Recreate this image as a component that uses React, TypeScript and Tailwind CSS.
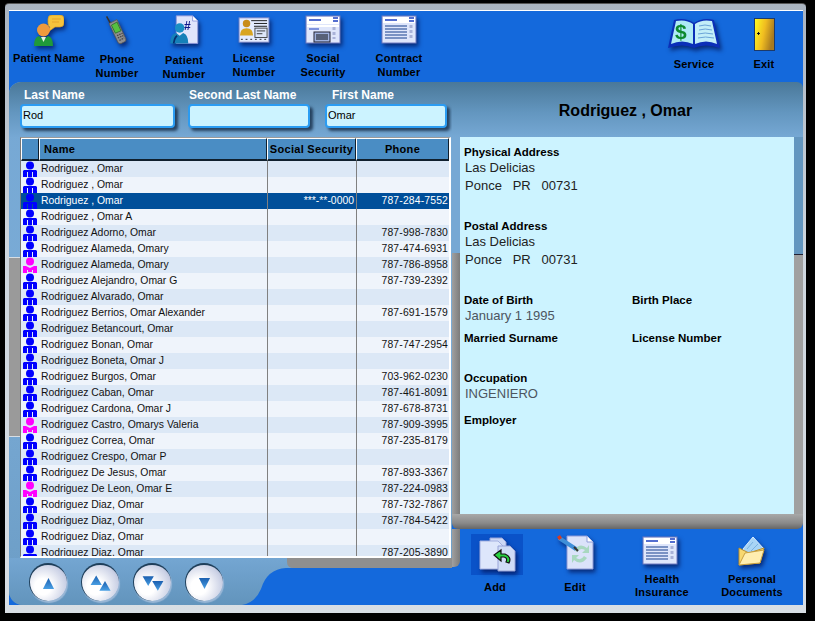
const FONT = "font-['Liberation_Sans',Arial,sans-serif]";

const patients: { name: string; ss?: string; phone?: string; female?: boolean }[] = [
  { name: "Rodriguez , Omar" },
  { name: "Rodriguez , Omar" },
  { name: "Rodriguez , Omar", ss: "***-**-0000", phone: "787-284-7552" },
  { name: "Rodriguez , Omar A" },
  { name: "Rodriguez Adorno, Omar", phone: "787-998-7830" },
  { name: "Rodriguez Alameda, Omary", phone: "787-474-6931" },
  { name: "Rodriguez Alameda, Omary", phone: "787-786-8958", female: true },
  { name: "Rodriguez Alejandro, Omar G", phone: "787-739-2392" },
  { name: "Rodriguez Alvarado, Omar" },
  { name: "Rodriguez Berrios, Omar Alexander", phone: "787-691-1579" },
  { name: "Rodriguez Betancourt, Omar" },
  { name: "Rodriguez Bonan, Omar", phone: "787-747-2954" },
  { name: "Rodriguez Boneta, Omar J" },
  { name: "Rodriguez Burgos, Omar", phone: "703-962-0230" },
  { name: "Rodriguez Caban, Omar", phone: "787-461-8091" },
  { name: "Rodriguez Cardona, Omar J", phone: "787-678-8731" },
  { name: "Rodriguez Castro, Omarys Valeria", phone: "787-909-3995", female: true },
  { name: "Rodriguez Correa, Omar", phone: "787-235-8179" },
  { name: "Rodriguez Crespo, Omar P" },
  { name: "Rodriguez De Jesus, Omar", phone: "787-893-3367" },
  { name: "Rodriguez De Leon, Omar E", phone: "787-224-0983", female: true },
  { name: "Rodriguez Diaz, Omar", phone: "787-732-7867" },
  { name: "Rodriguez Diaz, Omar", phone: "787-784-5422" },
  { name: "Rodriguez Diaz, Omar" },
  { name: "Rodriguez Diaz, Omar", phone: "787-205-3890" },
];

const SHADOW = "drop-shadow-[2px_3px_2px_rgba(0,10,70,0.65)]";
const TOP_GRADIENT = "bg-[linear-gradient(#4a7899,#6396bf_55%,#76a8d4)]";

function PatientNameIcon() {
  return (
    <svg width="30" height="31" viewBox="0 0 30 31" className={SHADOW}>
      <path d="M14 4 Q14 0 18 0 H26 Q30 0 30 4 V8 Q30 12 26 12 H21 L14 17 L16 12 Q14 11 14 8Z" fill="#f5c33c" stroke="#d09a2a" strokeWidth="0.7" />
      <path d="M18 4 H27 M18 7 H25" stroke="#e8a52a" strokeWidth="1.2" />
      <circle cx="9.5" cy="15" r="6.5" fill="#f09a3c" />
      <path d="M0 31 Q0 22 5 21 L9.5 25 L14 21 Q19 22 19 31Z" fill="#1f9a3a" />
      <path d="M7 22 L9.5 27 L12 22Z" fill="#e8f5e0" />
    </svg>
  );
}

function PhoneIcon() {
  return (
    <svg width="24" height="32" viewBox="0 0 30 36" className={SHADOW}>
      <path d="M2 1 L7 10" stroke="#333" strokeWidth="2" />
      <path d="M5 10 L15 5 L26 29 Q27 32 24 33 L20 35 Q17 36 16 33Z" fill="#8f8f8f" stroke="#555" />
      <path d="M8 12 L15 8 L20 19 L13 22Z" fill="#56c040" stroke="#2b6a2b" />
      <path d="M15 25 L22 22 M16 28 L23 25 M18 31 L24 28" stroke="#444" strokeWidth="1.5" strokeDasharray="2 1" />
    </svg>
  );
}

function PatientNumberIcon() {
  return (
    <svg width="30" height="31" viewBox="0 0 34 36" className={SHADOW}>
      <path d="M8 1 H27 L33 7 V33 H8Z" fill="#dfe4fb" stroke="#8a94d8" />
      <path d="M27 1 V7 H33" fill="#fff" stroke="#8a94d8" />
      <text x="17" y="17" fontSize="14" fontWeight="700" fill="#101a8a" fontFamily="Liberation Sans">#</text>
      <circle cx="12" cy="15" r="5.5" fill="#1a8fc4" />
      <path d="M1 33 Q1 22 8 21 L12 24 L16 21 Q22 23 22 33Z" fill="#1580b8" />
      <path d="M5 33 Q6 26 9 24" stroke="#062f70" strokeWidth="2" fill="none" />
    </svg>
  );
}

function LicenseIcon() {
  return (
    <svg width="34" height="28" viewBox="0 0 34 30" className={SHADOW}>
      <rect x="1" y="2" width="32" height="26" fill="#e4ecff" stroke="#7f8ac8" />
      <path d="M14 5 H31 M17 8 H31 M17 11 H31" stroke="#111" />
      <rect x="18" y="13" width="13" height="10" fill="#dde6f8" stroke="#444" />
      <path d="M20 16 H29 M20 19 H26" stroke="#333" />
      <circle cx="9" cy="8" r="4" fill="#c98d1a" />
      <path d="M2 21 Q2 13 9 13 Q16 13 16 21Z" fill="#d9a520" />
      <path d="M3 25 H31" stroke="#222" strokeDasharray="2 3" />
    </svg>
  );
}

function SocialIcon() {
  return (
    <svg width="36" height="30" viewBox="0 0 36 30" className={SHADOW}>
      <rect x="1" y="1" width="34" height="27" fill="#dfe6fb" stroke="#6f7ac0" />
      <rect x="2" y="2" width="32" height="7" fill="#fff" />
      <path d="M4 5 H16 M28 3 H33 M28 6 H33" stroke="#1c3fc0" strokeWidth="1.5" />
      <rect x="2" y="10" width="32" height="2" fill="#fff" />
      <path d="M4 14 H14" stroke="#1c3fc0" />
      <rect x="9" y="17" width="16" height="10" fill="#9fb1de" stroke="#223" />
      <path d="M11 20 H23 M11 22 H23 M11 24 H23" stroke="#111" />
      <path d="M29 12 V24" stroke="#aab2d8" strokeWidth="3" strokeDasharray="3 2" />
    </svg>
  );
}

function FormIcon() {
  return (
    <svg width="36" height="30" viewBox="0 0 36 30" className={SHADOW}>
      <rect x="1" y="1" width="34" height="27" fill="#dfe6fb" stroke="#6f7ac0" />
      <rect x="2" y="2" width="32" height="6" fill="#fff" />
      <path d="M4 5 H16 M28 3 H33 M28 6 H33" stroke="#1c3fc0" strokeWidth="1.5" />
      <path d="M4 11 H26 M4 14 H26 M4 17 H26 M4 20 H26 M4 23 H26" stroke="#7a92c4" strokeWidth="2" />
      <path d="M30 10 V24" stroke="#aab2d8" strokeWidth="3" strokeDasharray="3 2" />
    </svg>
  );
}

function ServiceIcon() {
  return (
    <svg width="54" height="34" viewBox="0 0 54 34" className={SHADOW}>
      <path d="M1 31 L7 3 Q18 0 27 6 Q36 0 47 3 L53 31 Q38 26 27 31 Q16 26 1 31Z" fill="#0b2fb8" />
      <path d="M4 27 L9 4 Q19 2 26 7 V27 Q15 22 4 27Z" fill="#aeeaf5" />
      <path d="M50 27 L45 4 Q35 2 28 7 V27 Q39 22 50 27Z" fill="#c2eef8" />
      <path d="M32 9 Q38 7 44 9 M32 13 Q38 11 45 13 M31 17 Q38 15 46 17 M31 21 Q38 19 47 21" stroke="#6aa4d8" fill="none" />
      <text x="8" y="22" fontSize="21" fontWeight="700" fill="#0c8a2e" fontFamily="Liberation Sans">$</text>
    </svg>
  );
}

function ExitIcon() {
  return (
    <svg width="21" height="33" viewBox="0 0 21 33">
      <defs>
        <linearGradient id="door" x1="0" x2="1" y1="0" y2="0.3">
          <stop offset="0" stopColor="#ffff20" />
          <stop offset="0.55" stopColor="#f0bc20" />
          <stop offset="1" stopColor="#a87a20" />
        </linearGradient>
      </defs>
      <rect x="0.5" y="0.5" width="20" height="32" fill="url(#door)" stroke="#1d3a6a" />
      <path d="M3 15.5 H6 M4.5 14 V17" stroke="#111" />
    </svg>
  );
}

function AddIcon() {
  return (
    <svg width="38" height="36" viewBox="0 0 38 36" className={SHADOW}>
      <path d="M12 1 H24 L28 5 V24 H12Z" fill="#cdd8f5" stroke="#98a4d8" />
      <path d="M2 4 H20 L25 9 V32 H2Z" fill="#dde6fb" stroke="#a4b0e0" />
      <path d="M20 9 H32 L37 14 V34 H20Z" fill="#d0dcf6" stroke="#98a4d8" />
      <path d="M31 26 Q34 20 27 17 H23 V13 L16 18 L23 24 V20 H26 Q30 21 28 25Z" fill="#28d040" stroke="#111" strokeWidth="1.2" />
    </svg>
  );
}

function EditIcon() {
  return (
    <svg width="38" height="36" viewBox="0 0 38 36" className={SHADOW}>
      <path d="M11 2 H31 L37 8 V35 H11Z" fill="#dbe3fa" stroke="#8f9bd8" />
      <path d="M31 2 V8 H37" fill="#fff" stroke="#8f9bd8" />
      <path d="M18 16 Q24 8 31 14 L33 11 V19 H26 L29 16 Q24 13 21 18Z" fill="#a8d8c0" />
      <path d="M31 24 Q25 32 18 26 L16 29 V21 H23 L20 24 Q25 27 28 22Z" fill="#a8d8c0" />
      <path d="M3 4 L20 15" stroke="#3f8fd8" strokeWidth="4" />
      <path d="M1 3 L4 1 L6 4 L3 6Z" fill="#d83a20" />
      <path d="M18 13 L22 17" stroke="#333" strokeWidth="2" />
    </svg>
  );
}

function DocumentsIcon() {
  return (
    <svg width="28" height="30" viewBox="0 0 28 30" className={SHADOW}>
      <path d="M5 13 L15 1 L26 13 L15 24Z" fill="#a8d4f5" stroke="#d8ecff" />
      <path d="M9 13 L15 6 M13 15 L20 8" stroke="#7ab0e0" />
      <path d="M1 12 L11 17 L26 12 L22 27 L1 29Z" fill="#f8d870" stroke="#b89030" />
      <path d="M1 29 L7 17 L26 14 L22 27Z" fill="#ffeeb0" stroke="#c8a040" />
    </svg>
  );
}

function PersonGlyph({ female }: { female?: boolean }) {
  const fill = female ? "#ff00ff" : "#0000ff";
  return (
    <svg width="14" height="16" viewBox="0 0 14 16" className="block">
      <circle cx="7" cy="4.5" r="4" fill={fill} />
      {female ? (
        <path d="M0 9 H3 L7 11 L11 9 H14 V16 H10 V13 H9 V15 H5 V13 H4 V16 H0Z" fill={fill} />
      ) : (
        <path d="M1 9 H13 L14 10 V16 H10 V11 H9 V16 H5 V11 H4 V16 H0 V10Z" fill={fill} />
      )}
    </svg>
  );
}

function ToolItem({
  icon,
  label,
  width,
  iconBox = "h-[32px] items-center",
  labelClass = "",
}: {
  icon: React.ReactNode;
  label: string[];
  width: string;
  iconBox?: string;
  labelClass?: string;
}) {
  return (
    <div className={`flex shrink-0 flex-col items-center ${width}`}>
      <div className={`flex ${iconBox}`}>{icon}</div>
      <div className={`text-center text-[11px] font-bold tracking-[0.2px] whitespace-nowrap text-black ${labelClass}`}>
        {label.map((line) => (
          <div key={line}>{line}</div>
        ))}
      </div>
    </div>
  );
}

function SearchField({ label, value, width, labelClass }: { label: string; value: string; width: string; labelClass: string }) {
  return (
    <div className={width}>
      <div className={`h-[16px] text-[12px] leading-[16px] font-bold whitespace-nowrap text-white ${labelClass}`}>{label}</div>
      <div className="mt-[1px] h-[24px] w-full rounded-[4px] border-2 border-[#2b9cf2] bg-[#ccf3ff] pl-[1px] text-[11px] leading-[18px] text-black shadow-[3px_3px_3px_rgba(15,35,60,0.75)]">
        {value}
      </div>
    </div>
  );
}

function HeaderCell({ label, className }: { label?: string; className: string }) {
  return (
    <div className={`flex h-[23px] shrink-0 items-center justify-center border-t border-l border-white border-r border-r-[#10202e] border-b-2 border-b-[#10202e] text-[11px] font-bold tracking-[0.3px] text-black ${className}`}>
      {label}
    </div>
  );
}

function PatientTable() {
  return (
    <div className="h-[421px] w-[431px] overflow-hidden border-t border-r-2 border-b-2 border-l border-t-[#9a9a9a] border-r-white border-b-white border-l-[#777] bg-[#eff4fb]">
      <div className="flex bg-[#4a8dc4]">
        <HeaderCell className="w-[18px]" />
        <HeaderCell label="Name" className="w-[228px] justify-start pl-[4px]" />
        <HeaderCell label="Social Security" className="w-[89px]" />
        <HeaderCell label="Phone" className="w-[93px]" />
      </div>
      {patients.map((row, i) => {
        const selected = i === 2;
        const rowBg = selected ? "bg-[#004f9a] text-white" : i % 2 === 0 ? "bg-[#dce8f6] text-[#111]" : "bg-[#eff4fb] text-[#111]";
        return (
          <div key={i} className={`flex h-[16px] text-[10.4px] leading-[15px] ${rowBg}`}>
            <div className="w-[18px] shrink-0 pl-[2px]">
              <PersonGlyph female={row.female} />
            </div>
            <div className="w-[228px] shrink-0 overflow-hidden pl-[2px] whitespace-nowrap">{row.name}</div>
            <div className="w-[89px] shrink-0 border-l border-[#808080] pr-[2px] text-right">{row.ss}</div>
            <div className="w-[93px] shrink-0 border-l border-[#808080] pr-[1px] text-right tracking-[0.15px]">{row.phone}</div>
          </div>
        );
      })}
    </div>
  );
}

function NavButton({ children }: { children: React.ReactNode }) {
  return (
    <div className="flex h-[38px] w-[38px] items-center justify-center rounded-full border-t-2 border-l border-[#1f3f5a] bg-[radial-gradient(circle_at_35%_60%,#ffffff_25%,#ccd2e6_70%,#97a3c6)] shadow-[1px_2px_1px_rgba(190,205,230,0.6)]">
      {children}
    </div>
  );
}

function Triangle({ points }: { points: string }) {
  return <polygon points={points} fill="url(#tri)" />;
}

function NavButtons() {
  return (
    <div className="flex gap-[14px] pt-[5px] pl-[20px]">
      <svg width="0" height="0" className="absolute">
        <defs>
          <linearGradient id="tri" x1="0" x2="0" y1="0" y2="1">
            <stop offset="0" stopColor="#1a5fb0" />
            <stop offset="1" stopColor="#4aa0e4" />
          </linearGradient>
        </defs>
      </svg>
      <NavButton>
        <svg width="13" height="13" viewBox="0 0 14 14"><Triangle points="7,1 13,13 1,13" /></svg>
      </NavButton>
      <NavButton>
        <svg width="24" height="19" viewBox="0 0 30 22"><Triangle points="9,1 16,13 2,13" /><Triangle points="20,8 27,20 13,20" /></svg>
      </NavButton>
      <NavButton>
        <svg width="24" height="19" viewBox="0 0 30 22"><Triangle points="2,2 16,2 9,14" /><Triangle points="14,8 28,8 21,20" /></svg>
      </NavButton>
      <NavButton>
        <svg width="13" height="13" viewBox="0 0 14 14"><Triangle points="1,1 13,1 7,13" /></svg>
      </NavButton>
    </div>
  );
}

function InfoField({ label, lines, muted, className = "" }: { label: string; lines?: string[]; muted?: boolean; className?: string }) {
  return (
    <div className={className}>
      <div className="text-[11.5px] leading-[14px] font-bold text-black">{label}</div>
      {lines?.map((line, i) => (
        <div key={i} className={`pl-[1px] text-[13px] leading-[18px] whitespace-pre ${muted ? "text-[#4c5560]" : "text-[#222]"}`}>
          {line}
        </div>
      ))}
    </div>
  );
}

function InfoPanel() {
  return (
    <div className="h-[377px] w-[334px] shrink-0 bg-[#ccf3ff] pt-[8px] pl-[4px]">
      <InfoField label="Physical Address" lines={["Las Delicias", "Ponce   PR   00731"]} />
      <InfoField label="Postal Address" lines={["Las Delicias", "Ponce   PR   00731"]} className="mt-[24px]" />
      <div className="mt-[24px] grid grid-cols-[168px_1fr]">
        <InfoField label="Date of Birth" lines={["January 1 1995"]} muted />
        <InfoField label="Birth Place" />
        <InfoField label="Married Surname" className="mt-[6px]" />
        <InfoField label="License Number" className="mt-[6px]" />
      </div>
      <InfoField label="Occupation" lines={["INGENIERO"]} muted className="mt-[26px]" />
      <InfoField label="Employer" className="mt-[10px]" />
    </div>
  );
}

export default function App() {
  return (
    <div className={`h-[621px] w-[815px] overflow-hidden bg-black pt-[3px] pl-[5px] ${FONT}`}>
      <div className="h-[610px] w-[801px] rounded-t-[4px] border-t border-t-[#555] bg-[linear-gradient(#aab4c0,#ced6de_40%,#d8dee4)] pt-[6px] pr-[3px] pb-[8px] pl-[4px]">
        <div className="flex h-[595px] w-[794px] flex-col border-t border-white bg-[#1469dc]">
          {/* toolbar */}
          <div className="flex h-[71px] shrink-0 pt-[3px] leading-[14px]">
            <ToolItem width="w-[80px]" icon={<PatientNameIcon />} label={["Patient Name"]} labelClass="mt-[5px]" />
            <ToolItem width="w-[56px]" icon={<PhoneIcon />} label={["Phone", "Number"]} labelClass="mt-[6px]" />
            <ToolItem width="w-[78px]" icon={<PatientNumberIcon />} label={["Patient", "Number"]} labelClass="mt-[7px]" />
            <ToolItem width="w-[62px]" icon={<LicenseIcon />} label={["License", "Number"]} labelClass="mt-[5px]" />
            <ToolItem width="w-[76px]" icon={<SocialIcon />} label={["Social", "Security"]} labelClass="mt-[5px]" />
            <ToolItem width="w-[76px]" icon={<FormIcon />} label={["Contract", "Number"]} labelClass="mt-[5px]" />
            <div className="ml-auto flex pr-[9px]">
              <ToolItem width="w-[80px]" icon={<ServiceIcon />} label={["Service"]} iconBox="h-[40px] items-center" labelClass="mt-[3px]" />
              <ToolItem width="w-[60px]" icon={<ExitIcon />} label={["Exit"]} iconBox="h-[40px] items-center" labelClass="mt-[3px]" />
            </div>
          </div>

          <div className="flex min-h-0 flex-1">
            {/* left column */}
            <div className="flex w-[443px] shrink-0 flex-col overflow-hidden rounded-tl-[12px] rounded-bl-[14px] bg-[linear-gradient(#76a8d4,#7aabd6_50%,#6e9fc8_92%,#5f8fb5)]">
              <div className={`flex h-[55px] shrink-0 gap-[13px] pt-[5px] pl-[11px] ${TOP_GRADIENT}`}>
                <SearchField label="Last Name" value="Rod" width="w-[155px]" labelClass="pl-[4px]" />
                <SearchField label="Second Last Name" value="" width="w-[122px]" labelClass="pl-[1px]" />
                <SearchField label="First Name" value="Omar" width="w-[122px] ml-[2px]" labelClass="pl-[7px]" />
              </div>
              <div className="flex">
                <div className="w-[11px] shrink-0 pt-[120px]">
                  <div className="h-[180px] border-y border-[#d8dee4] bg-[#9a9a9a]" />
                </div>
                <PatientTable />
              </div>
              <div className="relative min-h-0 flex-1 bg-[linear-gradient(#74a6d2,#6294bc)]">
                <NavButtons />
                <svg width="210" height="47" viewBox="0 0 210 47" className="absolute right-0 bottom-0">
                  <path d="M0 47 Q13 45 19 31 Q25 11 44 10 H210 V47Z" fill="#1469dc" />
                  <path d="M45 0 V4 Q45 10 52 10 H210 V0Z" fill="#8f8f8f" />
                </svg>
              </div>
            </div>

            {/* right column */}
            <div className="flex min-w-0 flex-1 flex-col">
              <div className={`flex h-[55px] shrink-0 items-center justify-center rounded-tr-[6px] pt-[2px] pr-[4px] text-[16px] font-bold text-black ${TOP_GRADIENT}`}>
                Rodriguez , Omar
              </div>
              <div className="flex">
                <div className="w-[8px] shrink-0 bg-[#76a8d4] pt-[116px]">
                  <div className="h-[261px] bg-[linear-gradient(90deg,#a0a0a0,#7c7c7c)]" />
                </div>
                <InfoPanel />
                <div className="w-[9px] shrink-0 bg-[#6396bf] pt-[117px]">
                  <div className="h-[260px] border-t border-[#223] bg-[#a0a0a0]" />
                </div>
              </div>
              <div className="h-[15px] shrink-0 rounded-b-[6px] bg-[linear-gradient(#a8a8a8,#8a8a8a_60%,#666)]" />
              <div className="flex min-h-0 flex-1 items-start">
                <div className="h-[38px] w-[8px] shrink-0 rounded-br-[6px] bg-[linear-gradient(90deg,#a0a0a0,#7c7c7c)]" />
                <div className="flex pl-[7px] leading-[13px]">
                  <ToolItem width="w-[56px]" icon={<AddIcon />} label={["Add"]} iconBox="mt-[5px] ml-[4px] h-[41px] w-[52px] items-center justify-center bg-[#0a52c8]" labelClass="mt-[6px]" />
                  <ToolItem width="w-[104px]" icon={<EditIcon />} label={["Edit"]} iconBox="h-[46px] items-center" labelClass="mt-[6px]" />
                  <ToolItem width="w-[70px]" icon={<FormIcon />} label={["Health", "Insurance"]} iconBox="h-[44px] items-center pr-[4px]" />
                  <ToolItem width="w-[110px]" icon={<DocumentsIcon />} label={["Personal", "Documents"]} iconBox="h-[44px] items-center" />
                </div>
              </div>
            </div>
          </div>
        </div>
      </div>
    </div>
  );
}
